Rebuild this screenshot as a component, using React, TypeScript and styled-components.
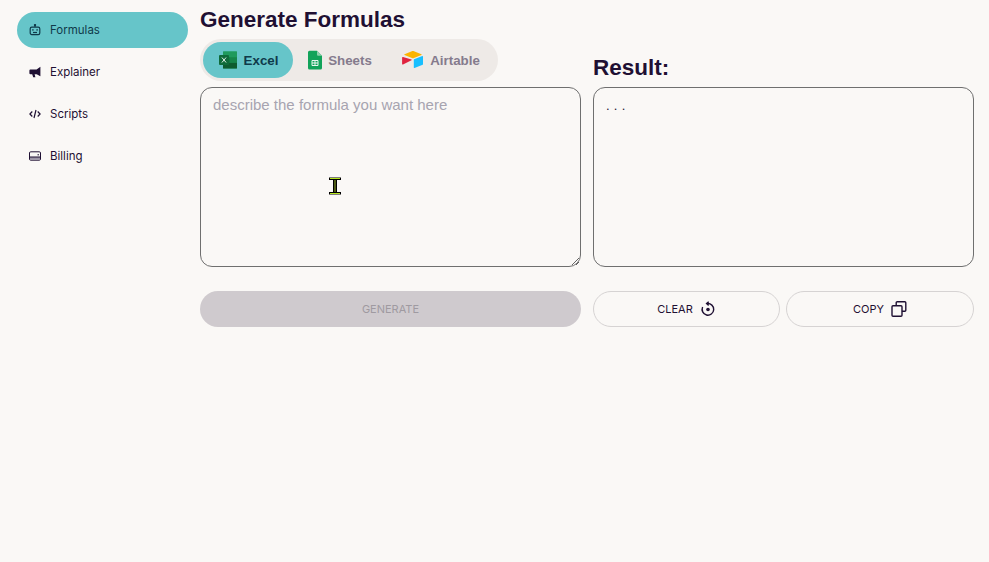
import React, { FC, ReactNode } from 'react'
import styled, { createGlobalStyle } from 'styled-components'

const INK = '#1f1033'

const GlobalStyle = createGlobalStyle`
  html, body {
    margin: 0;
    padding: 0;
    height: 100%;
    background: #faf8f6;
  }
  * {
    box-sizing: border-box;
  }
`

const PAGE = styled.div`
  position: relative;
  display: flex;
  width: 989px;
  height: 562px;
  background: #faf8f6;
  color: ${INK};
  overflow: hidden;
`

const SIDEBAR = styled.nav`
  display: flex;
  flex-direction: column;
  gap: 6px;
  width: 200px;
  padding: 12px 12px 0 17px;
`

const NAV_ITEM = styled.div<{ $active?: boolean }>`
  display: flex;
  align-items: center;
  gap: 9px;
  height: 36px;
  padding: 0 0 1px 12px;
  border-radius: 18px;
  background: ${(props) => (props.$active ? '#66c5c9' : 'transparent')};
  color: ${(props) => (props.$active ? '#0f3a4a' : INK)};
  font-family: Inter, sans-serif;
  font-size: 11.5px;
  svg {
    width: 12px;
    height: 12px;
    flex: none;
  }
`

const MAIN = styled.main`
  display: grid;
  grid-template-columns: 381px 381px;
  column-gap: 12px;
  align-content: start;
  align-items: end;
  padding-top: 6px;
`

const COLUMN = styled.section`
  display: flex;
  flex-direction: column;
`

const TITLE = styled.h1`
  margin: 0;
  font-family: 'Liberation Sans', Arial, sans-serif;
  font-size: 22.5px;
  line-height: 27px;
  font-weight: 700;
`

const RESULT_TITLE = styled(TITLE)`
  margin-bottom: 6px;
`

const TABS = styled.div`
  display: flex;
  align-self: flex-start;
  align-items: center;
  width: 298px;
  height: 42px;
  margin: 6px 0;
  padding: 0 3px;
  border-radius: 21px;
  background: #eeeae7;
`

const TAB = styled.div<{ $active?: boolean; $width: number }>`
  display: flex;
  align-items: center;
  justify-content: center;
  gap: 6px;
  width: ${(props) => props.$width}px;
  height: 36px;
  border-radius: 18px;
  background: ${(props) => (props.$active ? '#66c5c9' : 'transparent')};
  color: ${(props) => (props.$active ? '#0f3a4a' : '#857b8d')};
  font-family: 'Liberation Sans', Arial, sans-serif;
  font-size: 13.33px;
  font-weight: 700;
`

const PROMPT = styled.textarea`
  display: block;
  width: 381px;
  height: 180px;
  margin: 0;
  padding: 7px 12px;
  border: 1px solid #6f6f6f;
  border-radius: 12px;
  background: transparent;
  outline: none;
  font-family: 'Liberation Sans', Arial, sans-serif;
  font-size: 15px;
  line-height: 19px;
  color: ${INK};
  &::placeholder {
    color: #a7a4b0;
    opacity: 1;
  }
`

const RESULT = styled.div`
  width: 381px;
  height: 180px;
  padding: 8px 12px;
  border: 1px solid #6f6f6f;
  border-radius: 12px;
  font-family: 'Liberation Sans', Arial, sans-serif;
  font-size: 13px;
  line-height: 20px;
  letter-spacing: 0.3px;
`

const ACTIONS = styled.div`
  display: flex;
  gap: 6px;
  margin-top: 24px;
`

const GENERATE = styled.button`
  width: 381px;
  height: 36px;
  margin-top: 24px;
  padding: 0;
  border: 0;
  border-radius: 18px;
  background: #cfcace;
  color: #9f9aa1;
  font-family: Inter, sans-serif;
  font-size: 11px;
`

const ACTION = styled.button<{ $width: number }>`
  display: flex;
  align-items: center;
  justify-content: center;
  gap: 7px;
  width: ${(props) => props.$width}px;
  height: 36px;
  padding: 0;
  border: 1px solid #d6d3d3;
  border-radius: 18px;
  background: transparent;
  color: ${INK};
  font-family: Inter, sans-serif;
  font-size: 11px;
`

const CURSOR = styled.svg`
  position: absolute;
  left: 328px;
  top: 176px;
`

const BotIcon = () => (
  <svg viewBox="0 0 12 12" fill="none" stroke="currentColor" strokeWidth="1.2">
    <rect x="1.2" y="3.2" width="9.6" height="7.4" rx="1.6" />
    <path d="M6 3V1.2" />
    <circle cx="6" cy="1.1" r=".6" fill="currentColor" />
    <rect x="3.2" y="5.200" width="1.400" height="1.400" fill="currentColor" stroke="none" />
    <rect x="7.400" y="5.200" width="1.400" height="1.400" fill="currentColor" stroke="none" />
    <path d="M4 8.500h4" />
  </svg>
)

const MegaphoneIcon = () => (
  <svg viewBox="0 0 12 12" fill="currentColor">
    <path d="M11.400 .8v9.400L7.600 8.200H5.600l.8 3H4.200L3.200 8.200H1.400A1 1 0 0 1 .4 7.200V4.500a1 1 0 0 1 1-1h6.200z" />
  </svg>
)

const CodeIcon = () => (
  <svg viewBox="0 0 12 12" fill="none" stroke="currentColor" strokeWidth="1.2">
    <path d="M3.300 3.500.9 6l2.400 2.500M8.700 3.500 11.100 6 8.700 8.500M7 2 5 10" />
  </svg>
)

const CardIcon = () => (
  <svg viewBox="0 0 12 12" fill="none" stroke="currentColor" strokeWidth="1">
    <rect x=".5" y="1.800" width="11" height="8.400" rx="1.200" />
    <rect x="1" y="7" width="10" height="2.700" fill="#9c95a6" stroke="none" />
    <path d="M.5 7h11M8.500 4.800h1.500" />
  </svg>
)

const ExcelIcon = () => (
  <svg width="20" height="20" viewBox="0 0 20 20">
    <rect x="5" y="1.500" width="14" height="17" rx="1" fill="#21a366" />
    <rect x="5" y="1.500" width="14" height="5.700" fill="#1f9a5d" />
    <rect x="5" y="7.200" width="7" height="5.600" fill="#107c41" />
    <rect x="12" y="7.200" width="7" height="5.600" fill="#16854a" />
    <rect x="5" y="12.800" width="14" height="5.700" fill="#0e5c30" />
    <rect x="1" y="5" width="10" height="10" rx="1" fill="#0f6b3a" />
    <path d="M3.900 7.500 8.100 12.500M8.100 7.500 3.900 12.500" stroke="#dfeee6" strokeWidth="1" />
  </svg>
)

const SheetsIcon = () => (
  <svg width="14" height="20" viewBox="0 0 14 20">
    <path d="M1.500 .8h7.500L14 5.800v12.200a1.500 1.500 0 0 1-1.500 1.500h-11A1.500 1.500 0 0 1 0 18V2.300A1.500 1.500 0 0 1 1.500 .8z" fill="#12a35a" />
    <path d="M9 .8l5 5H10a1 1 0 0 1-1-1z" fill="#8ed1ac" />
    <path d="M4 10.500h6v5H4zM4 13h6M7 10.500v5" fill="none" stroke="#e8f6ee" strokeWidth="1" />
  </svg>
)

const AirtableIcon = () => (
  <svg width="22" height="20" viewBox="0 0 22 20">
    <path d="M9.800 1.200 2.500 4.200c-.4.200-.4.700 0 .9l7.400 2.900c.7.300 1.400.3 2.100 0l7.400-2.900c.4-.2.400-.7 0-.9l-7.400-3c-.7-.2-1.500-.2-2.200 0z" fill="#fcb400" />
    <path d="M11.800 9.800v7.700c0 .4.400.6.700.5l8.200-3.200c.2-.1.300-.3.300-.5V6.600c0-.4-.4-.6-.700-.5l-8.200 3.200c-.2.100-.3.300-.3.500z" fill="#18bfff" />
    <path d="M9.500 10.300 1 14.500c-.4.200-.9-.1-.9-.5V7.500c0-.4.500-.7.900-.5l8.500 2.600c.4.100.4.500 0 .7z" fill="#e0243f" />
  </svg>
)

const ResetIcon = () => (
  <svg width="16" height="16" viewBox="0 0 16 16" fill="none" stroke="currentColor" strokeWidth="1.400">
    <path d="M7.200 2.600A5.800 5.800 0 1 1 2.600 6" />
    <path d="M8.700.8 6.600 2.600l2.100 1.800" />
    <circle cx="8" cy="8.500" r="1.800" fill="currentColor" stroke="none" />
  </svg>
)

const CopyIcon = () => (
  <svg width="16" height="16" viewBox="0 0 16 16" fill="none" stroke="currentColor" strokeWidth="1.400">
    <path d="M5.200 4.600V1.700a1 1 0 0 1 1-1h7.600a1 1 0 0 1 1 1v7.600a1 1 0 0 1-1 1h-2.900" />
    <rect x="1" y="4.800" width="10" height="10.400" rx="1" />
  </svg>
)

const navItems: { label: string; icon: ReactNode; active?: boolean }[] = [
  { label: 'Formulas', icon: <BotIcon />, active: true },
  { label: 'Explainer', icon: <MegaphoneIcon /> },
  { label: 'Scripts', icon: <CodeIcon /> },
  { label: 'Billing', icon: <CardIcon /> }
]

const App: FC = () => {
  return (
    <PAGE>
      <GlobalStyle />
      <SIDEBAR>
        {navItems.map((item) => (
          <NAV_ITEM key={item.label} $active={item.active}>
            {item.icon}
            <span>{item.label}</span>
          </NAV_ITEM>
        ))}
      </SIDEBAR>
      <MAIN>
        <COLUMN>
          <TITLE>Generate Formulas</TITLE>
          <TABS>
            <TAB $active $width={90}>
              <ExcelIcon />
              Excel
            </TAB>
            <TAB $width={94}>
              <SheetsIcon />
              Sheets
            </TAB>
            <TAB $width={108}>
              <AirtableIcon />
              Airtable
            </TAB>
          </TABS>
          <PROMPT placeholder="describe the formula you want here" />
        </COLUMN>
        <COLUMN>
          <RESULT_TITLE>Result:</RESULT_TITLE>
          <RESULT>. . .</RESULT>
        </COLUMN>
        <GENERATE>GENERATE</GENERATE>
        <ACTIONS>
          <ACTION $width={187}>
            CLEAR
            <ResetIcon />
          </ACTION>
          <ACTION $width={188}>
            COPY
            <CopyIcon />
          </ACTION>
        </ACTIONS>
      </MAIN>
      <CURSOR width="14" height="20" viewBox="0 0 14 20">
        <path d="M1 1.500h12v2.500H9v12h4v2.500H1V16h4V4H1z" fill="#000" />
        <path d="M2 2.500h10M2 17.500h10" stroke="#b6e61e" strokeWidth="1" />
        <rect x="6" y="4" width="2" height="12" fill="#4c5a14" />
      </CURSOR>
    </PAGE>
  )
}

export default App
